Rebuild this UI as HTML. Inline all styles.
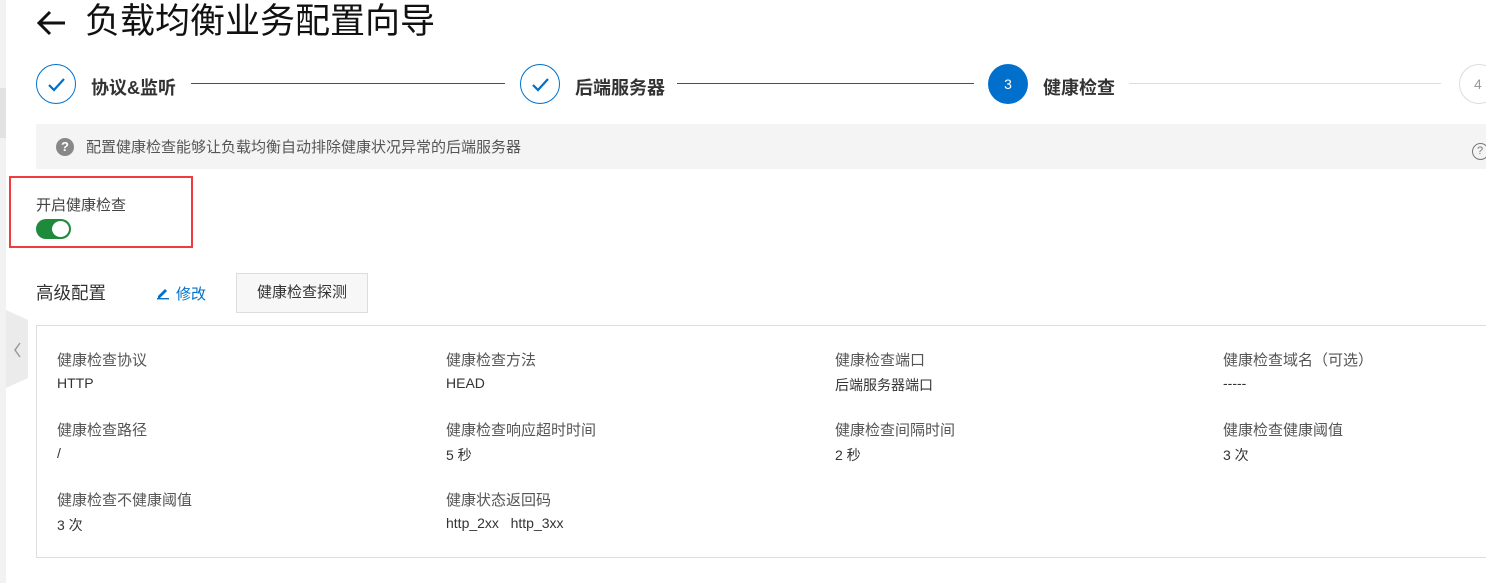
<!DOCTYPE html>
<html><head><meta charset="utf-8"><style>
*{margin:0;padding:0;box-sizing:border-box}
body{width:1486px;height:583px;overflow:hidden;background:#fff;font-family:"Liberation Sans","Noto Sans CJK SC",sans-serif;color:#333;position:relative}
.a{position:absolute;white-space:nowrap}
.lbl{font-size:15px;color:#555}
.val{font-size:14px;color:#333}
</style></head><body>
<div class="a" style="left:0;top:0;width:6px;height:583px;background:#f2f2f2"></div>
<div class="a" style="left:0;top:88px;width:6px;height:50px;background:#e2e2e2"></div>
<svg class="a" style="left:6px;top:310px" width="24" height="78"><polygon points="0,0 22,10 22,68 0,78" fill="#ebebeb"/><polyline points="14,33 9,40 14,47" fill="none" stroke="#999" stroke-width="1.5"/></svg>
<svg class="a" style="left:35px;top:8px" width="34" height="30"><path d="M30 15H4M15 4L4 15L15 26" fill="none" stroke="#111" stroke-width="3"/></svg>
<div class="a" style="left:85px;top:1px;font-size:35px;color:#111;line-height:42px">负载均衡业务配置向导</div>
<!-- steps -->
<div class="a" style="left:36px;top:64px;width:40px;height:40px;border:1.5px solid #0070cc;border-radius:50%"></div>
<svg class="a" style="left:36px;top:64px" width="40" height="40"><path d="M13 21L18 26L28 15" fill="none" stroke="#0070cc" stroke-width="2.2"/></svg>
<div class="a" style="left:91px;top:74px;font-size:18px;font-weight:bold;color:#333">协议&amp;监听</div>
<div class="a" style="left:191px;top:83px;width:314px;height:1px;background:#0a5fa8"></div>
<div class="a" style="left:520px;top:64px;width:40px;height:40px;border:1.5px solid #0070cc;border-radius:50%"></div>
<svg class="a" style="left:520px;top:64px" width="40" height="40"><path d="M13 21L18 26L28 15" fill="none" stroke="#0070cc" stroke-width="2.2"/></svg>
<div class="a" style="left:575px;top:74px;font-size:18px;font-weight:bold;color:#333">后端服务器</div>
<div class="a" style="left:677px;top:83px;width:297px;height:1px;background:#0a5fa8"></div>
<div class="a" style="left:988px;top:64px;width:40px;height:40px;background:#0070cc;border-radius:50%;color:#fff;font-size:14px;text-align:center;line-height:40px">3</div>
<div class="a" style="left:1043px;top:74px;font-size:18px;font-weight:bold;color:#333">健康检查</div>
<div class="a" style="left:1129px;top:83px;width:312px;height:1px;background:#ddd"></div>
<div class="a" style="left:1459px;top:64px;width:40px;height:40px;border:1px solid #ddd;border-radius:50%;color:#999;font-size:14px;line-height:38px;padding-left:14px">4</div>
<!-- tip -->
<div class="a" style="left:36px;top:124px;width:1450px;height:45px;background:#f4f4f4"></div>
<div class="a" style="left:56px;top:138px;width:18px;height:18px;border-radius:50%;background:#888;color:#fff;font-size:13px;font-weight:bold;text-align:center;line-height:18px">?</div>
<div class="a" style="left:86px;top:136px;font-size:15px;color:#555">配置健康检查能够让负载均衡自动排除健康状况异常的后端服务器</div>
<div class="a" style="left:1472px;top:143px;width:17px;height:17px;border:1px solid #777;border-radius:50%;font-size:11px;color:#777;padding-left:4px;line-height:15px">?</div>
<!-- red box -->
<div class="a" style="left:9px;top:176px;width:184px;height:72px;border:2px solid #f03c3c"></div>
<div class="a" style="left:36px;top:194px;font-size:15px;color:#444">开启健康检查</div>
<div class="a" style="left:36px;top:219px;width:35px;height:20px;background:#1e8a3c;border-radius:10px"></div>
<div class="a" style="left:52px;top:221px;width:17px;height:16px;background:#fff;border-radius:50%"></div>
<!-- advanced -->
<div class="a" style="left:36px;top:280px;font-size:17.5px;color:#333">高级配置</div>
<svg class="a" style="left:156px;top:286px" width="14" height="14"><path d="M2 10L9 3L11 5L4 12H2Z" fill="#0070cc"/><rect x="1" y="12" width="12" height="1.4" fill="#0070cc"/></svg>
<div class="a" style="left:176px;top:283px;font-size:15px;color:#0070cc">修改</div>
<div class="a" style="left:236px;top:273px;width:132px;height:40px;border:1px solid #ddd;background:#f7f7f7;font-size:15px;color:#333;text-align:center;line-height:38px">健康检查探测</div>
<div class="a" style="left:36px;top:325px;width:1460px;height:233px;border:1px solid #ddd"></div>
<div class="a lbl" style="left:57px;top:349px">健康检查协议</div><div class="a val" style="left:57px;top:375px">HTTP</div>
<div class="a lbl" style="left:446px;top:349px">健康检查方法</div><div class="a val" style="left:446px;top:375px">HEAD</div>
<div class="a lbl" style="left:835px;top:349px">健康检查端口</div><div class="a val" style="left:835px;top:375px">后端服务器端口</div>
<div class="a lbl" style="left:1223px;top:349px">健康检查域名（可选）</div><div class="a val" style="left:1223px;top:375px">-----</div>
<div class="a lbl" style="left:57px;top:419px">健康检查路径</div><div class="a val" style="left:57px;top:445px">/</div>
<div class="a lbl" style="left:446px;top:419px">健康检查响应超时时间</div><div class="a val" style="left:446px;top:445px">5 秒</div>
<div class="a lbl" style="left:835px;top:419px">健康检查间隔时间</div><div class="a val" style="left:835px;top:445px">2 秒</div>
<div class="a lbl" style="left:1223px;top:419px">健康检查健康阈值</div><div class="a val" style="left:1223px;top:445px">3 次</div>
<div class="a lbl" style="left:57px;top:489px">健康检查不健康阈值</div><div class="a val" style="left:57px;top:515px">3 次</div>
<div class="a lbl" style="left:446px;top:489px">健康状态返回码</div><div class="a val" style="left:446px;top:515px">http_2xx&nbsp;&nbsp;&nbsp;http_3xx</div>
</body></html>
